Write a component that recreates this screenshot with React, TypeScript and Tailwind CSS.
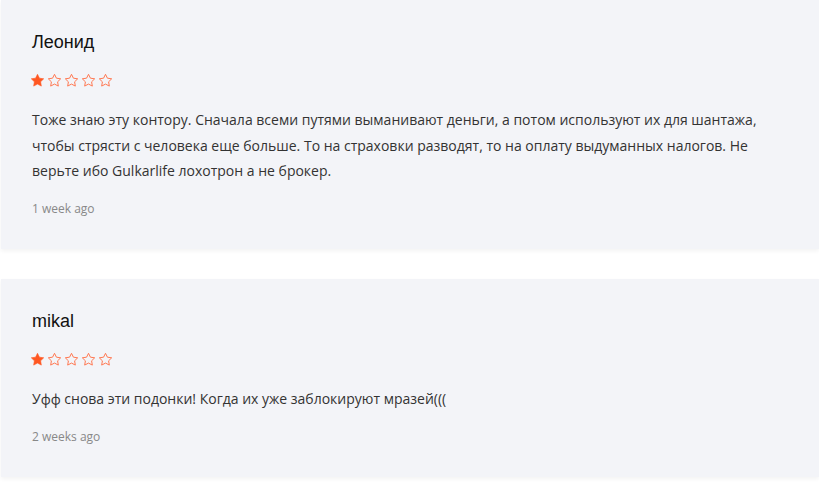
const reviews = [
  {
    name: "Леонид",
    rating: 1,
    text: "Тоже знаю эту контору. Сначала всеми путями выманивают деньги, а потом используют их для шантажа, чтобы стрясти с человека еще больше. То на страховки разводят, то на оплату выдуманных налогов. Не верьте ибо Gulkarlife лохотрон а не брокер.",
    date: "1 week ago",
  },
  {
    name: "mikal",
    rating: 1,
    text: "Уфф снова эти подонки! Когда их уже заблокируют мразей(((",
    date: "2 weeks ago",
  },
];

function Star({ filled }: { filled: boolean }) {
  return (
    <svg viewBox="1.5 1.5 21 21" className="w-[13px] h-[13px] shrink-0 overflow-visible">
      <polygon
        points="12,2 15.09,8.26 22,9.27 17,14.14 18.18,21.02 12,17.77 5.82,21.02 7,14.14 2,9.27 8.91,8.26"
        fill={filled ? "#ff5722" : "none"}
        stroke={filled ? "#ff5722" : "#ff7650"}
        strokeWidth={filled ? 1 : 1.6}
        strokeLinejoin="round"
      />
    </svg>
  );
}

export default function App() {
  return (
    <div className="bg-white min-h-screen pl-px flex flex-col gap-[30px]">
      {reviews.map((r) => (
        <div
          key={r.name}
          className="bg-[#f3f4f8] shadow-[0_2px_4px_rgba(0,0,0,0.05)] pt-[30px] pb-[31.5px] px-[31px] flex flex-col"
        >
          <h3 className="font-['Liberation_Sans',Arial,sans-serif] text-[18px] leading-[24px] text-[#111]">
            {r.name}
          </h3>
          <div className="flex gap-[4px] mt-[20px] -ml-px">
            {[1, 2, 3, 4, 5].map((i) => (
              <Star key={i} filled={i <= r.rating} />
            ))}
          </div>
          <p className="mt-[20px] font-['Open_Sans',sans-serif] text-[14px] leading-[25.5px] text-[#333]">
            {r.text}
          </p>
          <span className="mt-[16px] font-['Open_Sans',sans-serif] text-[12px] leading-[18px] text-[#888]">
            {r.date}
          </span>
        </div>
      ))}
    </div>
  );
}
